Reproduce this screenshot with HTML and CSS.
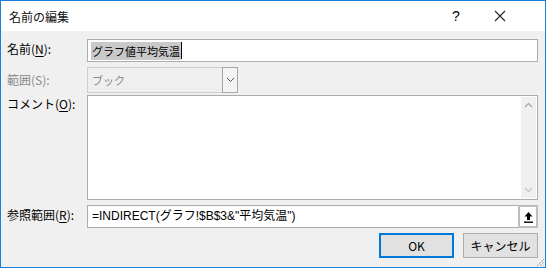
FILE: index.html
```html
<!DOCTYPE html>
<html lang="ja">
<head>
  <meta charset="UTF-8" />
  <title>名前の編集</title>
  <link rel="stylesheet" href="styles.css">
</head>
<body>
  <div class="dialog">
    <!-- Title bar -->
    <div class="titlebar">
      <span class="title">名前の編集</span>
      <span class="help">?</span>
      <span class="close">
        <svg width="12" height="12" viewBox="0 0 12 12"><path d="M1 1 L11 11 M11 1 L1 11" stroke="#222" stroke-width="1.1" fill="none"/></svg>
      </span>
    </div>

    <div class="content">
      <div class="row row-name">
        <label class="lbl">名前(<u>N</u>):</label>
        <div class="field name-field">
          <span class="sel">グラフ値平均気温</span><span class="caret"></span>
        </div>
      </div>

      <div class="row row-scope">
        <label class="lbl disabled">範囲(S):</label>
        <div class="select">
          <span class="select-text">ブック</span>
          <span class="select-btn">
            <svg width="9" height="6" viewBox="0 0 9 6"><path d="M1 1 L4.5 4.5 L8 1" stroke="#555" stroke-width="1" fill="none"/></svg>
          </span>
        </div>
      </div>

      <div class="row row-comment">
        <label class="lbl">コメント(<u>O</u>):</label>
        <div class="field comment-field">
          <div class="scrollbar">
            <svg width="9" height="6" viewBox="0 0 9 6"><path d="M1 5 L4.5 1.5 L8 5" stroke="#a6a6a6" stroke-width="1.2" fill="none"/></svg>
            <svg width="9" height="6" viewBox="0 0 9 6"><path d="M1 1 L4.5 4.5 L8 1" stroke="#c4c4c4" stroke-width="1.2" fill="none"/></svg>
          </div>
        </div>
      </div>

      <div class="row row-ref">
        <label class="lbl">参照範囲(<u>R</u>):</label>
        <div class="field ref-field">=INDIRECT(グラフ!$B$3&amp;"平均気温")</div>
        <span class="collapse-btn">
          <svg width="11" height="12" viewBox="0 0 11 12"><path d="M5.5 1 L1.5 5.5 L4 5.5 L4 9 L7 9 L7 5.5 L9.5 5.5 Z" fill="#000"/><rect x="1" y="10.5" width="9" height="1.4" fill="#000"/></svg>
        </span>
      </div>

      <div class="buttons">
        <button class="btn btn-ok">OK</button>
        <button class="btn">キャンセル</button>
      </div>
      <svg class="grip" width="10" height="10" viewBox="0 0 10 10"><path d="M9 2 L2 9 M9 5 L5 9 M9 8 L8 9" stroke="#b0b0b0" stroke-width="1" fill="none"/></svg>
    </div>
  </div>
</body>
</html>
```

FILE: styles.css
```css
body {
  margin: 0;
  font-family: "Noto Sans CJK JP", "Noto Sans", sans-serif;
  font-size: 12px;
  color: #000;
}

.dialog {
  width: 546px;
  height: 268px;
  box-sizing: border-box;
  border: 1px solid #1c7fd6;
  display: flex;
  flex-direction: column;
  background: #f0f0f0;
}

.titlebar {
  height: 30px;
  background: #fff;
  display: flex;
  align-items: center;
  padding-left: 8px;
}

.title {
  flex: 1;
  font-size: 12px;
  color: #111;
}

.help {
  width: 44px;
  text-align: center;
  font-family: "Liberation Sans", sans-serif;
  font-size: 14px;
}

.close {
  width: 44px;
  margin-right: 23px;
  display: flex;
  justify-content: center;
}

.content {
  flex: 1;
  position: relative;
  padding: 8px 7px 0 6px;
}

.row {
  display: flex;
  align-items: flex-start;
}

.lbl {
  width: 80px;
  flex: none;
  line-height: 16px;
  white-space: nowrap;
}

.lbl u {
  text-decoration-thickness: 1px;
  text-underline-offset: 2px;
}

.row-name { height: 23px; }
.row-name .lbl { padding-top: 2px; }

.row-scope { height: 26px; margin-top: 5px; }
.row-scope .lbl { padding-top: 5px; }

.row-comment { height: 105px; margin-top: 2px; }
.row-comment .lbl { padding-top: 1px; }

.row-ref { height: 23px; margin-top: 5px; }
.row-ref .lbl { padding-top: 2px; }

.disabled { color: #8a8a8a; }

.field {
  background: #fff;
  border: 1px solid #acacac;
  box-sizing: border-box;
  height: 100%;
}

.name-field {
  flex: 1;
  display: flex;
  align-items: center;
  padding-left: 3px;
}

.sel {
  background: #c9c9c9;
  font-size: 11px;
  line-height: 18px;
  padding: 0 1px;
}

.caret {
  width: 1px;
  height: 17px;
  background: #000;
}

.select {
  width: 151px;
  height: 26px;
  box-sizing: border-box;
  border: 1px solid #cdcdcd;
  background: #efefef;
  display: flex;
  align-items: center;
  color: #8a8a8a;
}

.select-text {
  flex: 1;
  padding-left: 4px;
  font-size: 11px;
}

.select-btn {
  width: 16px;
  height: 26px;
  margin: -1px -1px -1px 0;
  box-sizing: border-box;
  border: 1px solid #a8a8a8;
  background: #f4f4f4;
  display: flex;
  align-items: center;
  justify-content: center;
}

.comment-field {
  flex: 1;
  display: flex;
  justify-content: flex-end;
}

.scrollbar {
  width: 15px;
  margin: 1px 1px 1px 0;
  background: #f0f0f0;
  display: flex;
  flex-direction: column;
  justify-content: space-between;
  align-items: center;
  padding: 5px 0;
}

.ref-field {
  flex: 1;
  font-family: "Liberation Sans", "Noto Sans CJK JP", sans-serif;
  font-size: 12px;
  line-height: 21px;
  padding-left: 4px;
  border-right: none;
}

.collapse-btn {
  width: 20px;
  height: 23px;
  box-sizing: border-box;
  border: 2px solid #bdbdbd;
  background: #fff;
  display: flex;
  align-items: center;
  justify-content: center;
}

.buttons {
  display: flex;
  justify-content: flex-end;
  gap: 9px;
  margin-top: 5px;
}

.btn {
  width: 75px;
  height: 25px;
  box-sizing: border-box;
  border: 1px solid #adadad;
  background: #e1e1e1;
  font-family: "Noto Sans CJK JP", sans-serif;
  font-size: 12px;
  padding: 0;
}

.btn-ok {
  border: 2px solid #0078d7;
}

.grip {
  position: absolute;
  right: 0;
  bottom: 0;
}
```
